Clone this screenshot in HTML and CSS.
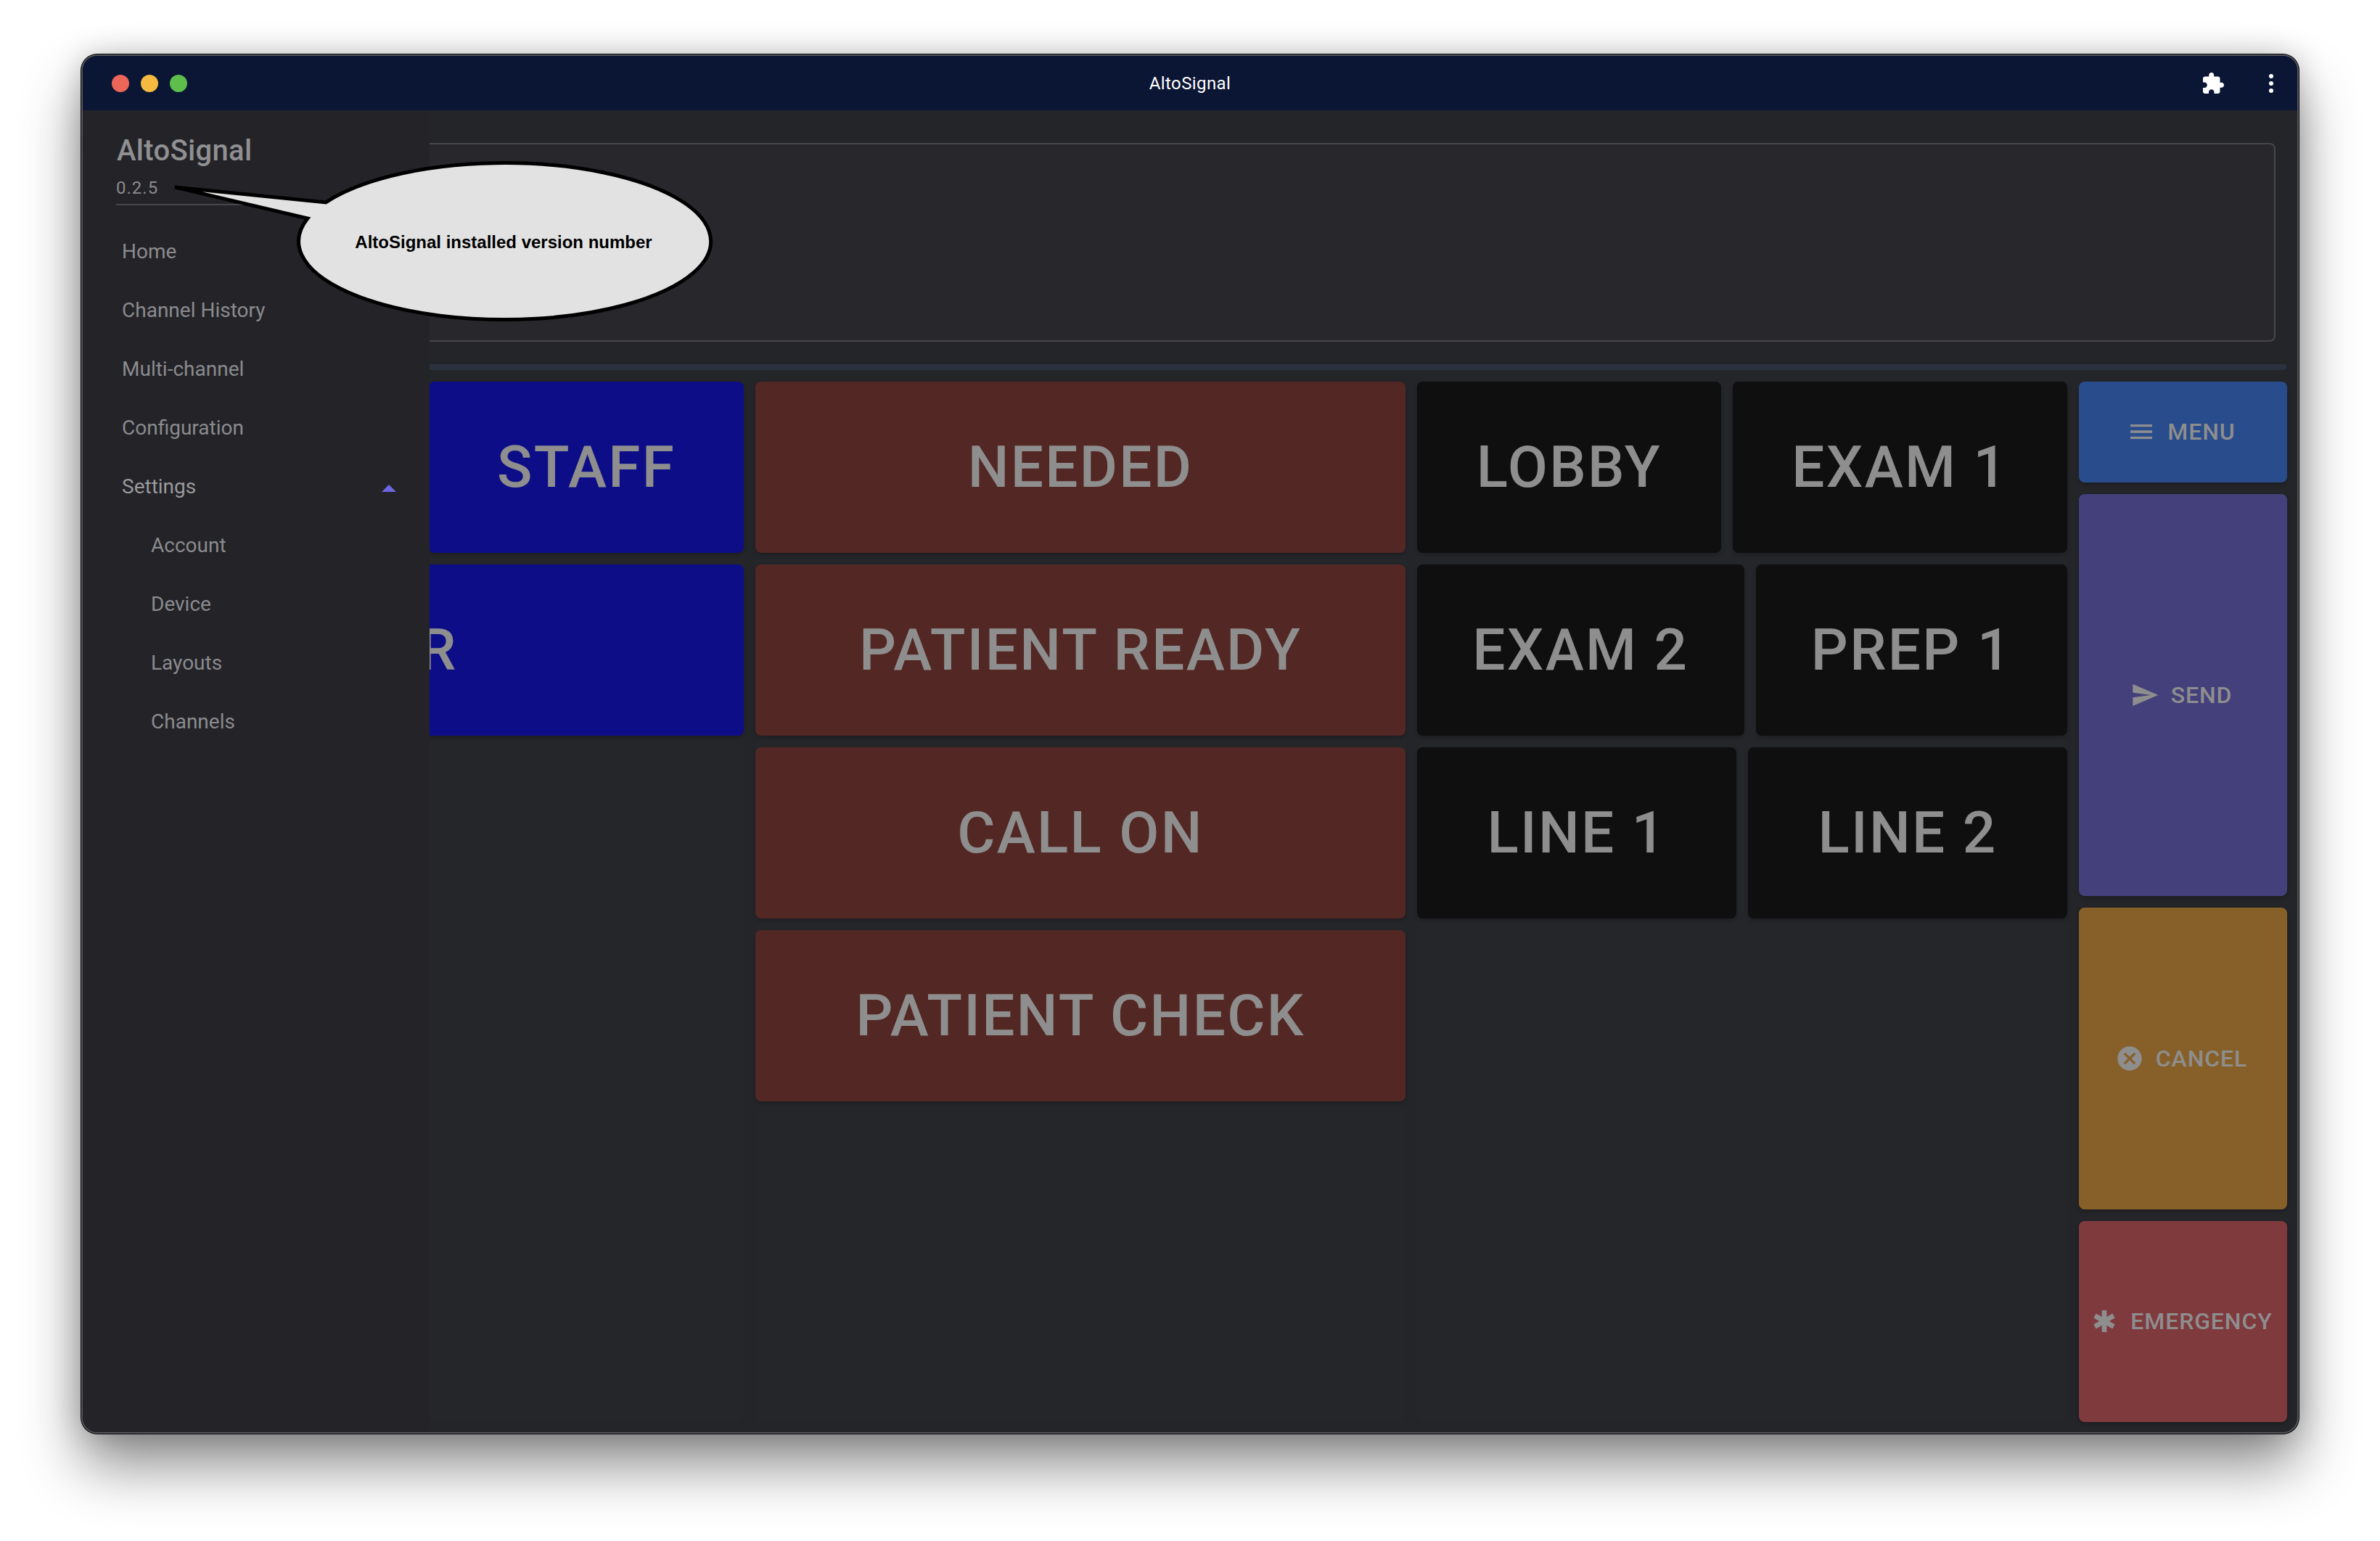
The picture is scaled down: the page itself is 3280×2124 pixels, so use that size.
FILE: index.html
```html
<!DOCTYPE html>
<html lang="en">
<head>
  <meta charset="UTF-8">
  <title>AltoSignal</title>
  <link rel="stylesheet" href="styles.css">
</head>
<body>
  <div class="window">
    <header class="titlebar">
      <div class="lights">
        <span class="light red"></span>
        <span class="light yellow"></span>
        <span class="light green"></span>
      </div>
      <div class="title">AltoSignal</div>
      <div class="tools">
        <svg class="puzzle" viewBox="2 1 21 21"><path d="M20.5 11H19V7c0-1.1-.9-2-2-2h-4V3.5C13 2.12 11.88 1 10.5 1S8 2.12 8 3.5V5H4c-1.1 0-1.99.9-1.99 2v3.8H3.5c1.49 0 2.7 1.21 2.7 2.7s-1.21 2.7-2.7 2.7H2V20c0 1.1.9 2 2 2h3.8v-1.5c0-1.49 1.21-2.7 2.7-2.7 1.49 0 2.7 1.21 2.7 2.7V22H17c1.1 0 2-.9 2-2v-4h1.5c1.38 0 2.5-1.12 2.5-2.5S21.88 11 20.5 11z"/></svg>
        <div class="dots"><i></i><i></i><i></i></div>
      </div>
    </header>

    <main class="content">
      <div class="top-box"></div>
      <div class="divider"></div>
      <div class="board">
        <div class="col">
          <div class="row">
            <div class="card blue hidden-card"></div>
            <div class="card blue">STAFF</div>
          </div>
          <div class="row"><div class="card blue">DR</div></div>
        </div>
        <div class="col">
          <div class="row"><div class="card brown">NEEDED</div></div>
          <div class="row"><div class="card brown">PATIENT READY</div></div>
          <div class="row"><div class="card brown">CALL ON</div></div>
          <div class="row"><div class="card brown">PATIENT CHECK</div></div>
        </div>
        <div class="col">
          <div class="row">
            <div class="card black">LOBBY</div>
            <div class="card black">EXAM 1</div>
          </div>
          <div class="row">
            <div class="card black">EXAM 2</div>
            <div class="card black">PREP 1</div>
          </div>
          <div class="row">
            <div class="card black">LINE 1</div>
            <div class="card black">LINE 2</div>
          </div>
        </div>
        <div class="actions">
          <button class="action menu">
            <svg viewBox="0 0 24 24"><path d="M3 18h18v-2H3v2zm0-5h18v-2H3v2zm0-7v2h18V6H3z"/></svg>MENU
          </button>
          <button class="action send">
            <svg viewBox="0 0 24 24"><path d="M2.01 21 23 12 2.01 3 2 10l15 2-15 2z"/></svg>SEND
          </button>
          <button class="action cancel">
            <svg viewBox="0 0 24 24"><path d="M12 2C6.47 2 2 6.47 2 12s4.47 10 10 10 10-4.47 10-10S17.53 2 12 2zm5 13.59L15.59 17 12 13.41 8.41 17 7 15.59 10.59 12 7 8.41 8.41 7 12 10.59 15.59 7 17 8.41 13.41 12 17 15.59z"/></svg>CANCEL
          </button>
          <button class="action emergency">
            <svg viewBox="0 0 24 24"><rect x="10" y="3" width="4" height="18"/><rect x="10" y="3" width="4" height="18" transform="rotate(60 12 12)"/><rect x="10" y="3" width="4" height="18" transform="rotate(120 12 12)"/></svg>EMERGENCY
          </button>
        </div>
      </div>
    </main>

    <nav class="sidebar">
      <div class="brand">AltoSignal</div>
      <div class="version">0.2.5</div>
      <ul class="nav">
        <li>Home</li>
        <li>Channel History</li>
        <li>Multi-channel</li>
        <li>Configuration</li>
        <li class="open">Settings<span class="caret"></span></li>
        <li class="sub">Account</li>
        <li class="sub">Device</li>
        <li class="sub">Layouts</li>
        <li class="sub">Channels</li>
      </ul>
    </nav>

    <!-- annotation, drawn in page coordinates -->
    <svg class="bubble" viewBox="114 77 1000 500">
      <path class="bubble-shape" d="M449 279 A284 108 0 1 1 424 301 L241 258 Z"/>
      <text class="bubble-text" x="694" y="342" text-anchor="middle">AltoSignal installed version number</text>
    </svg>
  </div>
</body>
</html>
```

FILE: styles.css
```css
html {
  background: #fff;
}
body {
  box-sizing: border-box;
  height: 2124px;
  margin: 0;
  padding: 75px 0 0 112px;
  overflow: hidden;
  font-family: Roboto, "Liberation Sans", sans-serif;
}
.window {
  position: relative;
  box-sizing: border-box;
  width: 3056px;
  height: 1901px;
  border: 2px solid #55565a;
  border-radius: 22px;
  background: #242529;
  overflow: hidden;
  box-shadow: 0 0 0 1px #000, 0 44px 80px rgba(0, 0, 0, 0.45), 0 0 40px rgba(0, 0, 0, 0.2);
}
.titlebar {
  height: 75px;
  background: #0b1534;
  display: grid;
  grid-template-columns: 1fr auto 1fr;
  align-items: center;
  padding: 0 40px;
}
.lights {
  display: flex;
  gap: 16px;
}
.light {
  width: 24px;
  height: 24px;
  border-radius: 50%;
}
.red { background: #ec6559; }
.yellow { background: #f4bb40; }
.green { background: #5dbe4b; }
.title {
  color: #fff;
  font-size: 24px;
  letter-spacing: 0.4px;
}
.tools {
  display: flex;
  align-items: center;
  justify-content: flex-end;
  gap: 62px;
  margin-right: -7px;
}
.puzzle {
  width: 29px;
  height: 29px;
  fill: #fff;
}
.dots {
  display: flex;
  flex-direction: column;
  gap: 4px;
}
.dots i {
  display: block;
  width: 6px;
  height: 6px;
  border-radius: 50%;
  background: #fff;
}
.content {
  padding: 15px 15px 0 15px;
}
.top-box {
  height: 270px;
  margin: 30px 15px 0 0;
  border: 2px solid #47474a;
  border-radius: 8px;
  background: #28282c;
}
.divider {
  height: 8px;
  margin-top: 31px;
  border-radius: 4px;
  background: #2a3240;
}
.board {
  display: grid;
  grid-template-columns: 896px 896px 896px 287px;
  gap: 16px;
  height: 1434px;
  margin-top: 16px;
}
.col {
  display: flex;
  flex-direction: column;
  gap: 16px;
  background: #25262a;
  border-radius: 8px;
}
.row {
  display: flex;
  gap: 16px;
  height: 236px;
}
.card {
  flex: 1 1 auto;
  display: flex;
  align-items: center;
  justify-content: center;
  padding: 0 40px;
  border-radius: 8px;
  font-size: 80px;
  font-weight: 500;
  letter-spacing: 2.3px;
  color: #8e8e8e;
  box-shadow: 0 3px 5px rgba(0, 0, 0, 0.2);
}
.hidden-card {
  flex: 0 0 446px;
  box-sizing: border-box;
}
.blue { background: #0d0e87; }
.brown { background: #532723; }
.black { background: #0f0f0f; }
.actions {
  display: flex;
  flex-direction: column;
  gap: 16px;
}
.action {
  border: 0;
  padding: 0 5px 0 0;
  border-radius: 8px;
  display: flex;
  align-items: center;
  justify-content: center;
  gap: 16px;
  font-family: inherit;
  font-size: 32px;
  font-weight: 500;
  letter-spacing: 0.9px;
  color: #8e8e8e;
  box-shadow: 0 3px 5px rgba(0, 0, 0, 0.2);
}
.action svg {
  width: 40px;
  height: 40px;
  fill: #8e8e8e;
}
.menu { flex: 1 1 0; background: #294c8c; }
.send { flex: 4 1 0; background: #44407c; }
.cancel { flex: 3 1 0; background: #876029; }
.emergency { flex: 2 1 0; background: #7f3a3d; }
.sidebar {
  position: absolute;
  left: 0;
  top: 75px;
  bottom: 0;
  width: 478px;
  box-sizing: border-box;
  padding: 0 47px 0 46px;
  background: #232328;
  color: #8b8b8e;
}
.brand {
  margin-top: 32px;
  padding-left: 1px;
  font-size: 40px;
  font-weight: 500;
  line-height: 48px;
  letter-spacing: 0.3px;
  color: #909092;
}
.version {
  margin-top: 11px;
  padding-bottom: 6px;
  font-size: 24px;
  line-height: 32px;
  letter-spacing: 1px;
  border-bottom: 2px solid #47474a;
}
.nav {
  list-style: none;
  margin: 23px 0 0;
  padding: 0;
}
.nav li {
  position: relative;
  height: 81px;
  line-height: 81px;
  padding-left: 8px;
  font-size: 28px;
}
.nav .sub {
  padding-left: 48px;
}
.nav .open {
  color: #9a9a9c;
}
.caret {
  position: absolute;
  right: -1px;
  top: 38px;
  width: 0;
  height: 0;
  border-left: 10px solid transparent;
  border-right: 10px solid transparent;
  border-bottom: 10px solid #6c66e0;
}
.bubble {
  position: absolute;
  left: 0;
  top: 0;
  width: 1000px;
  height: 500px;
}
.bubble-shape {
  fill: #e2e2e2;
  stroke: #000;
  stroke-width: 5;
}
.bubble-text {
  font-family: "Liberation Sans", Arial, sans-serif;
  font-size: 24px;
  font-weight: bold;
  fill: #000;
}
```
